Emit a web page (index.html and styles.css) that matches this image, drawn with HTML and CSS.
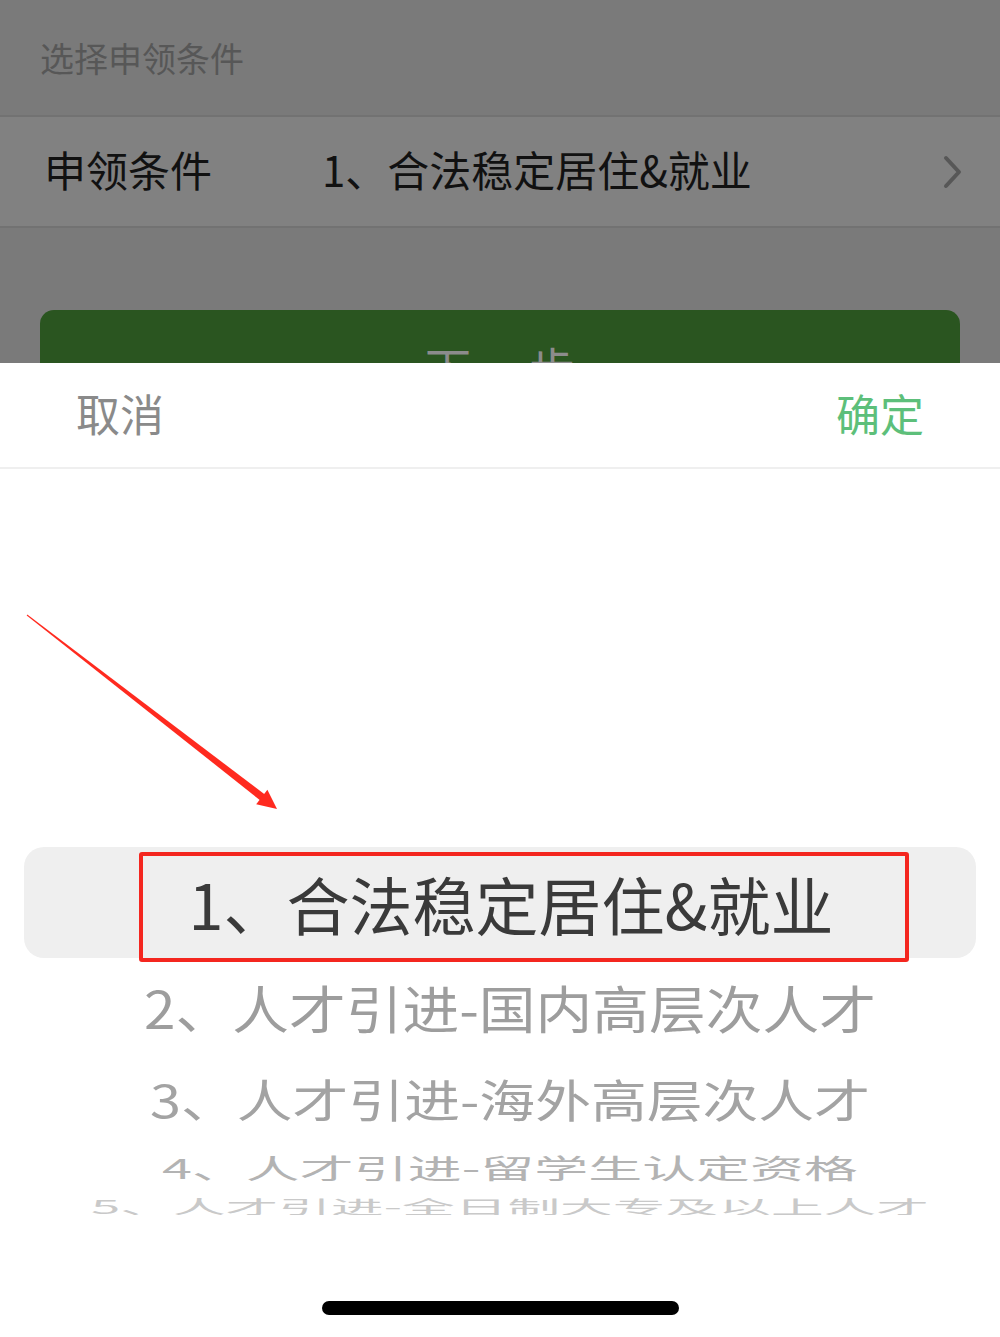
FILE: index.html
```html
<!DOCTYPE html>
<html lang="zh-CN">
<head>
<meta charset="utf-8">
<title>选择申领条件</title>
<link rel="stylesheet" href="styles.css">
</head>
<body>
<div class="screen">
  <div class="page">
    <div class="section-title">选择申领条件</div>
    <div class="row">
      <span class="row-label">申领条件</span>
      <span class="row-value">1、合法稳定居住&amp;就业</span>
      <svg class="chevron" width="24" height="34" viewBox="0 0 24 34"><path d="M6 3 L19 17 L6 31" fill="none" stroke="#575757" stroke-width="4" stroke-linecap="round" stroke-linejoin="round"/></svg>
    </div>
    <div class="btn-wrap">
      <div class="btn">下一步</div>
    </div>
  </div>

  <div class="sheet">
    <div class="sheet-head">
      <span class="cancel">取消</span>
      <span class="ok">确定</span>
    </div>
    <div class="wheel">
      <div class="item sel"><span>1、合法稳定居住&amp;就业</span></div>
      <div class="item i2"><span>2、人才引进-国内高层次人才</span></div>
      <div class="item i3"><span>3、人才引进-海外高层次人才</span></div>
      <div class="item i4"><span>4、人才引进-留学生认定资格</span></div>
      <div class="item i5"><span>5、人才引进-全日制大专及以上人才</span></div>
    </div>
    <div class="home"><div class="home-bar"></div></div>
  </div>

  <svg class="arrow" width="300" height="230" viewBox="0 600 300 230">
    <polygon fill="#ff2a1f" points="26.7,615.4 27.3,614.6 266.2,795.5 261.6,801.4"/>
    <polygon fill="#ff2a1f" points="277,809 256.2,804.3 267.4,789.8"/>
  </svg>
  <div class="mark"></div>
</div>
</body>
</html>
```

FILE: styles.css
```css
* { box-sizing: border-box; }
html, body { margin: 0; padding: 0; background: #fff; }
body {
  font-family: "Noto Sans CJK SC", "Noto Sans", "Liberation Sans", sans-serif;
}
.screen {
  position: relative;
  width: 1000px;
  height: 1337px;
  overflow: hidden;
  background: #7a7a7a;
}
.page { display: flex; flex-direction: column; }
.section-title {
  height: 115px;
  padding-left: 40px;
  display: flex;
  align-items: center;
  font-size: 34px;
  color: #575757;
  line-height: 1;
}
.row {
  height: 113px;
  background: #818181;
  border-top: 2px solid #727272;
  border-bottom: 2px solid #727272;
  display: flex;
  align-items: center;
  padding-left: 44px;
  padding-right: 36px;
  padding-bottom: 5px;
  font-size: 42px;
  color: #111;
  line-height: 1;
}
.row-label { width: 278px; }
.row-value { flex: 1; }
.chevron { display: block; margin-top: 5px; }
.btn-wrap { padding: 82px 40px 0; }
.btn {
  height: 112px;
  background: #2a5520;
  border-radius: 14px;
  display: flex;
  align-items: center;
  justify-content: center;
  font-size: 46px;
  letter-spacing: 6px;
  padding-left: 6px;
  color: #8c8c8c;
  line-height: 1;
}
.sheet {
  position: absolute;
  top: 363px;
  left: 0;
  right: 0;
  bottom: 0;
  background: #fff;
  display: flex;
  flex-direction: column;
}
.sheet-head {
  height: 106px;
  border-bottom: 2px solid #efefef;
  display: flex;
  align-items: center;
  justify-content: space-between;
  padding: 0 76px 4px 76px;
  font-size: 44px;
  line-height: 1;
}
.cancel { color: #8a8a8a; }
.ok { color: #5dbf7a; }
.wheel {
  height: 746px;
  overflow: hidden;
  padding-top: 378px;
  display: flex;
  flex-direction: column;
}
.item {
  flex: none;
  display: flex;
  align-items: center;
  justify-content: center;
  padding-left: 20px;
  font-size: 62px;
  line-height: 1;
  white-space: nowrap;
}
.item span { display: inline-block; }
.sel {
  height: 111px;
  margin: 0 24px;
  padding-left: 22px;
  background: #efefef;
  border-radius: 20px;
  color: #3a3a3a;
  font-size: 63px;
}
.i2 { height: 98px; color: #9d9d9d; }
.i2 span { transform: scale(0.915, 0.83); }
.i3 { height: 84px; color: #a3a3a3; }
.i3 span { transform: scale(0.9, 0.73); }
.i4 { height: 54px; color: #b3b3b3; }
.i4 span { transform: scale(0.87, 0.44); }
.i5 { height: 24px; color: #c9c9c9; }
.i5 span { transform: scale(0.85, 0.3); }
.home {
  flex: 1;
  display: flex;
  justify-content: center;
  padding-top: 86px;
}
.home-bar {
  width: 357px;
  height: 14px;
  border-radius: 7px;
  background: #000;
}
.arrow {
  position: absolute;
  left: 0;
  top: 600px;
}
.mark {
  position: absolute;
  left: 139px;
  top: 852px;
  width: 770px;
  height: 110px;
  border: 4px solid #f4261f;
  border-radius: 3px;
}
```
